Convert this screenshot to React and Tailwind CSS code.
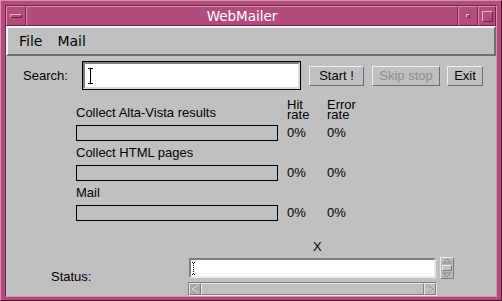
import React from "react";

const font = { fontFamily: '"Liberation Sans", Arial, sans-serif' };
const titleFont = { fontFamily: '"DejaVu Sans", sans-serif' };

function TitleBox({ className = "", children }) {
  return (
    <div
      className={
        "flex items-center justify-center border-t border-l border-t-[#dc8cae] border-l-[#dc8cae] border-b border-r border-b-[#6e2548] border-r-[#6e2548] bg-[#b24d7b] " +
        className
      }
    >
      {children}
    </div>
  );
}

function Button({ children, disabled, className = "" }) {
  return (
    <div
      className={
        "flex h-[20px] items-center justify-center border border-t-[#efefef] border-l-[#efefef] border-b-[#6e6e6e] border-r-[#6e6e6e] bg-[#c0c0c0] text-[13px] " +
        (disabled ? "text-[#8e8e8e] " : "text-black ") +
        className
      }
    >
      {children}
    </div>
  );
}

function Bar() {
  return <div className="h-[16px] w-[202px] border border-black bg-[#c0c0c0]" />;
}

function BarRow() {
  return (
    <div className="flex h-[16px] items-center">
      <Bar />
      <div className="ml-[9px] w-[40px] text-[13px]">0%</div>
      <div className="text-[13px]">0%</div>
    </div>
  );
}

export default function App() {
  return (
    <div
      style={font}
      className="flex h-[301px] w-[502px] flex-col border border-t-[#dc8cae] border-l-[#dc8cae] border-b-[#4a1731] border-r-[#4a1731] bg-[#b24d7b] p-[4px]"
    >
      <div className="flex flex-1 flex-col border border-t-[#6e2548] border-l-[#6e2548] border-b-[#dc8cae] border-r-[#dc8cae]">
        {/* title bar */}
        <div className="flex h-[20px]">
          <TitleBox className="w-[20px]">
            <div className="h-[4px] w-[12px] border border-t-[#f0b0cc] border-l-[#f0b0cc] border-b-[#6e2548] border-r-[#6e2548]" />
          </TitleBox>
          <TitleBox className="flex-1 text-[13.5px] text-white">
            <span style={titleFont}>WebMailer</span>
          </TitleBox>
          <TitleBox className="w-[20px]">
            <div className="h-[4px] w-[4px] border border-t-[#f0b0cc] border-l-[#f0b0cc] border-b-[#6e2548] border-r-[#6e2548]" />
          </TitleBox>
          <TitleBox className="w-[18px]">
            <div className="h-[11px] w-[11px] border border-t-[#f0b0cc] border-l-[#f0b0cc] border-b-[#6e2548] border-r-[#6e2548]" />
          </TitleBox>
        </div>

        {/* content */}
        <div className="flex flex-1 flex-col bg-[#c0c0c0]">
          {/* menu bar */}
          <div
            style={titleFont}
            className="flex h-[30px] items-center gap-[15px] border-t-2 border-l-2 border-t-[#f4f4f4] border-l-[#f4f4f4] border-b-2 border-r-2 border-b-[#6e6e6e] border-r-[#6e6e6e] pl-[11px] text-[14px]"
          >
            <span>File</span>
            <span>Mail</span>
          </div>

          {/* search row */}
          <div className="mt-[5px] flex h-[29px] items-center">
            <div className="ml-[17px] w-[59px] text-[13px]">Search:</div>
            <div className="h-[29px] w-[219px] border border-black">
              <div className="flex h-full items-center border-2 border-t-[#7e7e7e] border-l-[#7e7e7e] border-b-[#dcdcdc] border-r-[#dcdcdc] bg-white pl-[3px]">
                <svg width="5" height="16" viewBox="0 0 5 16">
                  <path d="M0 0.5 H5 M2.5 0.5 V15.5 M0 15.5 H5" stroke="#000" strokeWidth="1" fill="none" />
                </svg>
              </div>
            </div>
            <Button className="ml-[8px] w-[55px]">Start !</Button>
            <Button disabled className="ml-[8px] w-[68px]">
              Skip stop
            </Button>
            <Button className="ml-[7px] w-[36px]">Exit</Button>
          </div>

          {/* progress section */}
          <div className="mt-[10px] flex flex-col pl-[70px]">
            <div className="flex h-[25px]">
              <div className="flex w-[211px] items-center text-[13px]">Collect Alta-Vista results</div>
              <div className="flex w-[40px] flex-col text-[13px] leading-[10px]">
                <span className="h-[10px]">Hit</span>
                <span className="h-[10px]">rate</span>
              </div>
              <div className="flex flex-col text-[13px] leading-[10px]">
                <span className="h-[10px]">Error</span>
                <span className="h-[10px]">rate</span>
              </div>
            </div>
            <BarRow />
            <div className="flex h-[24px] items-center text-[13px]">Collect HTML pages</div>
            <BarRow />
            <div className="flex h-[24px] items-center text-[13px]">Mail</div>
            <BarRow />
          </div>

          <div className="mt-[19px] flex h-[12px] items-center pl-[307px] text-[13px] leading-none">X</div>

          {/* status */}
          <div className="mt-[5px] flex flex-1">
            <div className="flex w-[182px] items-center pl-[45px] text-[13px]">Status:</div>
            <div className="flex flex-col">
              <div className="flex items-start">
                <div className="ml-[1px] mt-[1px] flex h-[20px] w-[247px] items-center border-2 border-t-[#7e7e7e] border-l-[#7e7e7e] border-b-[#e8e8e8] border-r-[#e8e8e8] bg-white pl-[1px]">
                  <div className="h-[13px] w-[3px] border-y border-dotted border-black">
                    <div className="mx-auto h-full w-px border-l border-dotted border-black" />
                  </div>
                </div>
                <div className="ml-[4px] flex h-[22px] w-[14px] flex-col items-center border border-t-[#e8e8e8] border-l-[#e8e8e8] border-b-[#7e7e7e] border-r-[#7e7e7e] bg-[#b8b8b8]">
                  <svg width="10" height="6" viewBox="0 0 10 6">
                    <path d="M1 5 L5 1 L9 5 Z" fill="none" stroke="#8a8a8a" />
                  </svg>
                  <div className="my-[1px] h-[6px] w-[10px] border border-t-[#e8e8e8] border-l-[#e8e8e8] border-b-[#7e7e7e] border-r-[#7e7e7e] bg-[#c0c0c0]" />
                  <svg width="10" height="6" viewBox="0 0 10 6">
                    <path d="M1 1 L5 5 L9 1 Z" fill="none" stroke="#8a8a8a" />
                  </svg>
                </div>
              </div>
              <div className="mt-[3px] flex h-[14px] w-[249px] border border-t-[#7e7e7e] border-l-[#7e7e7e] border-b-[#e8e8e8] border-r-[#e8e8e8] bg-[#b4b4b4]">
                <div className="flex w-[12px] items-center justify-center border border-t-[#e8e8e8] border-l-[#e8e8e8] border-b-[#7e7e7e] border-r-[#7e7e7e] bg-[#a8a8a8]">
                  <svg width="9" height="10" viewBox="0 0 9 10">
                    <path d="M8 1 L1 5 L8 9" fill="none" stroke="#dcdcdc" />
                  </svg>
                </div>
                <div className="flex-1 border border-t-[#e8e8e8] border-l-[#e8e8e8] border-b-[#7e7e7e] border-r-[#7e7e7e] bg-[#c0c0c0]" />
                <div className="flex w-[12px] items-center justify-center border border-t-[#e8e8e8] border-l-[#e8e8e8] border-b-[#7e7e7e] border-r-[#7e7e7e] bg-[#c0c0c0]">
                  <svg width="9" height="10" viewBox="0 0 9 10">
                    <path d="M1 1 L8 5 L1 9" fill="none" stroke="#9a9a9a" />
                  </svg>
                </div>
              </div>
            </div>
          </div>
        </div>
      </div>
    </div>
  );
}
